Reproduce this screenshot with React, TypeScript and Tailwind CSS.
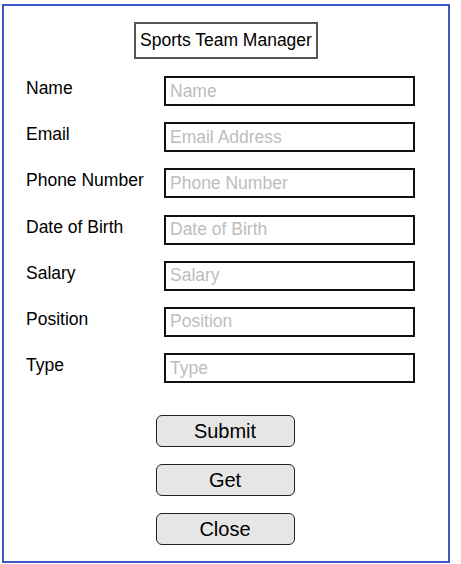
const fields = [
  { label: 'Name', placeholder: 'Name' },
  { label: 'Email', placeholder: 'Email Address' },
  { label: 'Phone Number', placeholder: 'Phone Number' },
  { label: 'Date of Birth', placeholder: 'Date of Birth' },
  { label: 'Salary', placeholder: 'Salary' },
  { label: 'Position', placeholder: 'Position' },
  { label: 'Type', placeholder: 'Type' },
];

function FormRow({ label, placeholder }: { label: string; placeholder: string }) {
  return (
    <div className="flex items-start">
      <label className="w-[138px] pt-[2px] text-[17.5px] leading-[20px] text-black">{label}</label>
      <input
        className="h-[30px] w-[251px] border-2 border-[#111] bg-white px-[4px] text-[17.5px] text-black outline-none placeholder:text-[#bdbdbd]"
        placeholder={placeholder}
      />
    </div>
  );
}

function ActionButton({ children }: { children: string }) {
  return (
    <button className="h-[32px] w-[139px] rounded-[6px] border-[1.5px] border-[#222] bg-[#e6e6e6] text-[20px] leading-none text-black">
      {children}
    </button>
  );
}

export default function App() {
  return (
    <div className="bg-white pl-[2px] pt-[4px]" style={{ fontFamily: '"Liberation Sans", Arial, sans-serif' }}>
      <div className="flex h-[559px] w-[448px] flex-col border-2 border-[#3a5bc7]">
        <div className="flex justify-center pt-[16px]">
          <div className="flex h-[37px] w-[184px] items-center justify-center border-2 border-[#555] text-[17.5px] text-black">
            Sports Team Manager
          </div>
        </div>
        <div className="mt-[17px] flex flex-col gap-[16.2px] pl-[22px]">
          {fields.map((f) => (
            <FormRow key={f.label} label={f.label} placeholder={f.placeholder} />
          ))}
        </div>
        <div className="mt-[32px] flex flex-col items-center gap-[17px] pr-[2px]">
          <ActionButton>Submit</ActionButton>
          <ActionButton>Get</ActionButton>
          <ActionButton>Close</ActionButton>
        </div>
      </div>
    </div>
  );
}
